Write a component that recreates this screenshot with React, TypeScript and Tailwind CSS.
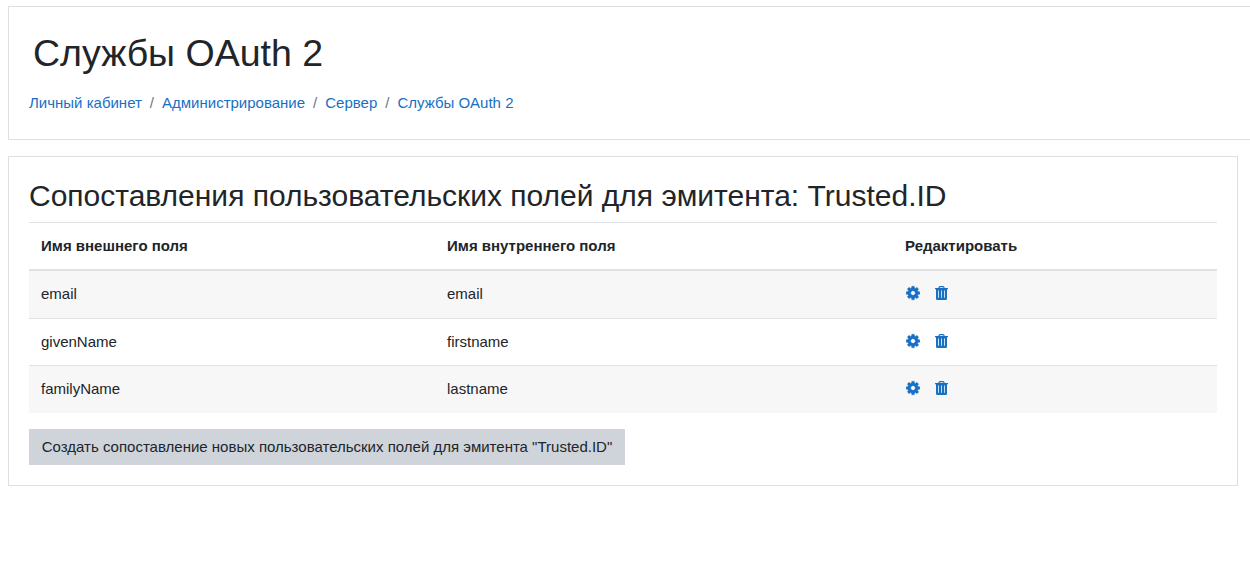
const rows = [
  ["email", "email"],
  ["givenName", "firstname"],
  ["familyName", "lastname"],
];
const crumbs = ["Личный кабинет", "Администрирование", "Сервер", "Службы OAuth 2"];

function Gear() {
  return (
    <svg width="14" height="16" viewBox="0 0 1536 1792" fill="currentColor" stroke="currentColor" strokeWidth="40">
      <path d="M1024 896q0-106-75-181t-181-75-181 75-75 181 75 181 181 75 181-75 75-181zm512-109v222q0 12-8 23t-20 13l-185 28q-19 54-39 91 35 50 107 138 10 12 10 25t-9 23q-27 37-99 108t-94 71q-12 0-26-9l-138-108q-44 23-91 38-16 136-29 186-7 28-36 28h-222q-14 0-24.500-8.500t-11.500-21.500l-28-184q-49-16-90-37l-141 107q-10 9-25 9-14 0-25-11-126-114-165-168-7-10-7-23 0-12 8-23 15-21 51-66.500t54-70.500q-27-50-41-99l-183-27q-13-2-21-12.500t-8-23.500v-222q0-12 8-23t19-13l186-28q14-46 39-92-40-57-107-138-10-12-10-24 0-10 9-23 26-36 98.500-107.500t94.500-71.500q13 0 26 10l138 107q44-23 91-38 16-136 29-186 7-28 36-28h222q14 0 24.500 8.500t11.500 21.500l28 184q49 16 90 37l142-107q9-9 24-9 13 0 25 10 129 119 165 170 7 8 7 22 0 12-8 23-15 21-51 66.500t-54 70.500q26 50 41 98l183 28q13 2 21 12.500t8 23.500z" />
    </svg>
  );
}

function Trash() {
  return (
    <svg width="13" height="16" viewBox="0 0 13 16" fill="currentColor">
      <path d="M3.700 3.500L4.300 2.100q.2-.5.800-.5h2.800q.6 0 .8.500L9.300 3.500" fill="none" stroke="currentColor" strokeWidth="1.200" />
      <path
        fillRule="evenodd"
        d="M.3 3h12.400q.3 0 .3.300v.900H12v9.200q0 1.600-1.400 1.600H2.400Q1 15 1 13.400V4.200H0v-.9q0-.3.300-.3zM3 5.500v7.300h1V5.500zm3 0v7.300h1V5.500zm3 0v7.300h1V5.500z"
      />
      <path d="M3 5.500h1v7.300H3zM6 5.500h1v7.300H6zM9 5.500h1v7.300H9z" opacity=".2" />
    </svg>
  );
}

export default function App() {
  return (
    <div className="h-[584px] overflow-hidden bg-white pl-2 pt-1.5 font-['Liberation_Sans',Arial,sans-serif] text-[15px] leading-[22px] text-[#212529]">
      <header className="h-[134px] border border-r-0 border-[#dfdfdf] px-5 pt-5">
        <h1 className="ml-1 mt-1 text-[37.5px] leading-[45px]">Службы OAuth 2</h1>
        <nav className="mt-4 flex text-[#1870c5]">
          {crumbs.map((c, i) => (
            <span key={c} className="flex">
              {i > 0 && <span className="px-2 text-[#6c757d]">/</span>}
              <a href="#">{c}</a>
            </span>
          ))}
        </nav>
      </header>
      <main className="mr-3 mt-4 h-[330px] border border-[#dfdfdf] px-5 pt-[21px]">
        <h2 className="text-[30px] leading-9">Сопоставления пользовательских полей для эмитента: Trusted.ID</h2>
        <table className="mt-2 w-full table-fixed border-separate border-spacing-0 text-left">
          <colgroup>
            <col className="w-[406px]" />
            <col className="w-[458px]" />
            <col />
          </colgroup>
          <thead>
            <tr className="h-[49px]">
              {["Имя внешнего поля", "Имя внутреннего поля", "Редактировать"].map((t) => (
                <th key={t} className="border-b-2 border-t border-[#dee2e6] px-3 py-0 font-bold">{t}</th>
              ))}
            </tr>
          </thead>
          <tbody className="[&_td]:border-[#dee2e6] [&_td]:px-3 [&_td]:pt-0 [&_tr+tr_td]:border-t [&_tr:nth-child(odd)_td]:pb-px">
            {rows.map(([a, b]) => (
              <tr key={a} className="h-[47px] odd:bg-[#f7f7f7] last:h-12">
                <td>{a}</td>
                <td>{b}</td>
                <td>
                  <div className="-mt-0.5 flex items-center gap-[15px] pl-px text-[#1870c5]">
                    <Gear />
                    <Trash />
                  </div>
                </td>
              </tr>
            ))}
          </tbody>
        </table>
        <button className="mt-4 h-9 w-[596px] bg-[#ced4da] text-[15px]">
          Создать сопоставление новых пользовательских полей для эмитента "Trusted.ID"
        </button>
      </main>
    </div>
  );
}
